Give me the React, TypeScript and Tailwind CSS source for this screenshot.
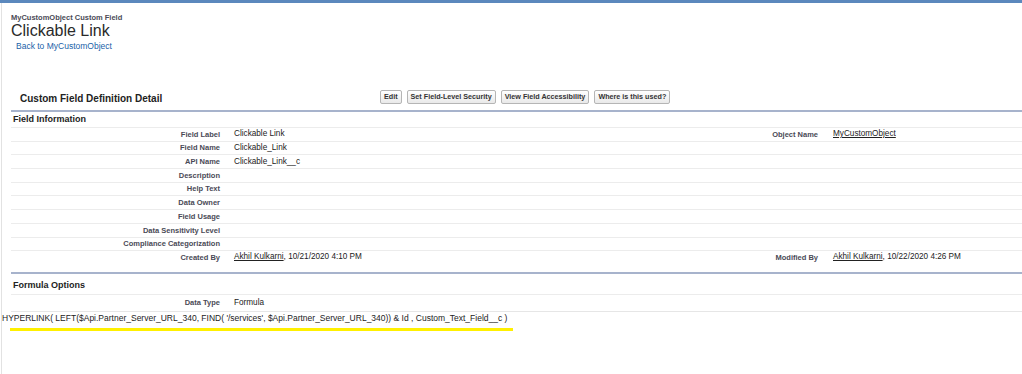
import React from "react";

const rows: [string, React.ReactNode, string, React.ReactNode][] = [
  ["Field Label", "Clickable Link", "Object Name", <span className="underline">MyCustomObject</span>],
  ["Field Name", "Clickable_Link", "", ""],
  ["API Name", "Clickable_Link__c", "", ""],
  ["Description", "", "", ""],
  ["Help Text", "", "", ""],
  ["Data Owner", "", "", ""],
  ["Field Usage", "", "", ""],
  ["Data Sensitivity Level", "", "", ""],
  ["Compliance Categorization", "", "", ""],
  [
    "Created By",
    <span>
      <span className="underline">Akhil Kulkarni</span>, 10/21/2020 4:10 PM
    </span>,
    "Modified By",
    <span>
      <span className="underline">Akhil Kulkarni</span>, 10/22/2020 4:26 PM
    </span>,
  ],
];

function Btn({ children }: { children: React.ReactNode }) {
  return (
    <div className="h-[14px] px-[3px] flex items-center rounded-[2px] border border-[#b5b5b5] bg-gradient-to-b from-[#ffffff] to-[#e9e9e9] text-[7.2px] font-bold text-[#333]">
      {children}
    </div>
  );
}

function Row({ l1, v1, l2, v2, h }: { l1: string; v1: React.ReactNode; l2: string; v2: React.ReactNode; h: string }) {
  return (
    <div className={`flex items-center border-t border-[#ececec] ${h}`}>
      <div className="w-[209px] shrink-0 text-right text-[7.5px] font-bold text-[#4a4a56]">{l1}</div>
      <div className="w-[445px] shrink-0 pl-[14px] text-[8.2px] text-[#222]">{v1}</div>
      <div className="w-[153px] shrink-0 text-right text-[7.5px] font-bold text-[#4a4a56]">{l2}</div>
      <div className="pl-[15px] text-[8.2px] text-[#222]">{v2}</div>
    </div>
  );
}

export default function App() {
  return (
    <div
      className="w-[1022px] h-[374px] bg-white overflow-hidden flex flex-col"
      style={{ fontFamily: '"Liberation Sans", Arial, sans-serif' }}
    >
      <div className="h-[3px] shrink-0 bg-[#5b88bd]" />
      <div className="flex-1 ml-[1px] border-l border-[#e2e2e2] flex flex-col">
        <div className="pl-[9px] pt-[10px]">
          <div className="text-[7.5px] leading-[9px] font-bold text-[#4a4a56]">MyCustomObject Custom Field</div>
          <div className="text-[16px] leading-[18px] text-[#2a2a2a]">Clickable Link</div>
          <div className="mt-[1px] pl-[5px] text-[8.5px] leading-[10px] text-[#1b5fa8]">Back to MyCustomObject</div>
        </div>

        <div className="ml-[9px] mt-[37px] flex flex-col">
          <div className="h-[20px] flex items-center">
            <div className="w-[369px] shrink-0 pl-[9px] text-[10px] font-bold text-[#222]">Custom Field Definition Detail</div>
            <div className="flex gap-[5px] -mt-[2px]">
              <Btn>Edit</Btn>
              <Btn>Set Field-Level Security</Btn>
              <Btn>View Field Accessibility</Btn>
              <Btn>Where is this used?</Btn>
            </div>
          </div>
          <div className="mt-[2px] h-[2px] bg-[#a7b3cc]" />
          <div className="h-[15px] flex items-center pl-[2px] text-[9px] font-bold text-[#222]">Field Information</div>
          {rows.map(([l1, v1, l2, v2], i) => (
            <Row key={i} l1={l1} v1={v1} l2={l2} v2={v2} h="h-[13.7px]" />
          ))}
          <div className="mt-[8px] h-[2px] bg-[#a7b3cc]" />
          <div className="h-[20px] flex items-center pl-[2px] pt-[4px] text-[9px] font-bold text-[#222]">Formula Options</div>
          <div className="border-b border-[#e6e6e6]">
            <Row l1="Data Type" v1="Formula" l2="" v2="" h="h-[17px]" />
          </div>
        </div>

        <div className="mt-[1px] text-[8.5px] leading-[10px] text-[#222] whitespace-nowrap">
          HYPERLINK( LEFT($Api.Partner_Server_URL_340, FIND( '/services', $Api.Partner_Server_URL_340)) &amp; Id , Custom_Text_Field__c )
        </div>
        <div className="mt-[5px] ml-[8px] w-[503px] h-[3px] bg-[#fff000]" />
      </div>
    </div>
  );
}
